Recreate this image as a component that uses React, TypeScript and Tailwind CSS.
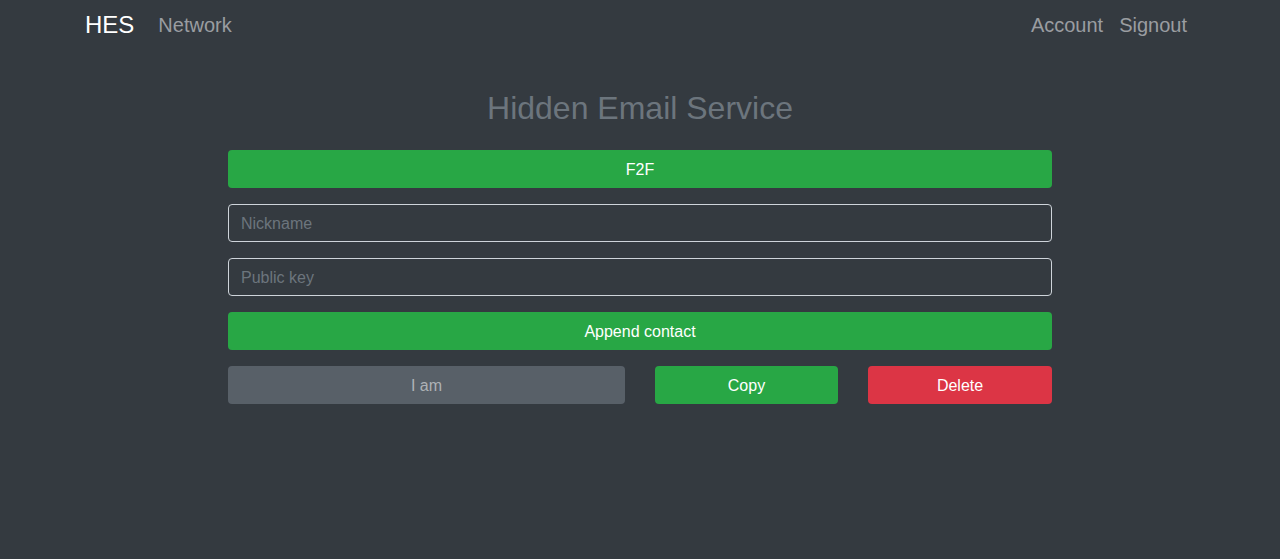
import React from "react";

const font = { fontFamily: '"Liberation Sans", Arial, sans-serif' };

function NavBar() {
  return (
    <nav className="h-12 w-[1140px] mx-auto px-[15px] pt-[2px] flex items-center justify-between">
      <div className="flex items-center">
        <span className="text-[24px] leading-none text-white mr-6">HES</span>
        <a className="text-[20px] leading-none text-[#9a9da1]">Network</a>
      </div>
      <div className="flex items-center gap-4 pr-2">
        <a className="text-[20px] leading-none text-[#9a9da1]">Account</a>
        <a className="text-[20px] leading-none text-[#9a9da1]">Signout</a>
      </div>
    </nav>
  );
}

export default function App() {
  return (
    <div className="min-h-[559px] bg-[#343a40]" style={font}>
      <NavBar />
      <main className="w-[824px] mx-auto pt-10">
        <h2 className="text-[32px] leading-[38px] text-center text-[#6c757d] pt-px mb-[23px]">
          Hidden Email Service
        </h2>
        <div className="flex flex-col gap-4">
          <button className="h-[38px] w-full rounded bg-[#28a745] text-white text-base pt-[2px]">
            F2F
          </button>
          <input
            placeholder="Nickname"
            className="h-[38px] w-full rounded border border-[#ced4da] bg-transparent px-3 pt-[2px] text-base text-white placeholder:text-[#6c757d] outline-none"
          />
          <input
            placeholder="Public key"
            className="h-[38px] w-full rounded border border-[#ced4da] bg-transparent px-3 pt-[2px] text-base text-white placeholder:text-[#6c757d] outline-none"
          />
          <button className="h-[38px] w-full rounded bg-[#28a745] text-white text-base pt-[2px]">
            Append contact
          </button>
          <div className="grid grid-cols-[397px_183px_184px] gap-[30px]">
            <button className="h-[38px] rounded bg-[#586068] text-[#aeb2b6] text-base pt-[2px]">
              I am
            </button>
            <button className="h-[38px] rounded bg-[#28a745] text-white text-base pt-[2px]">
              Copy
            </button>
            <button className="h-[38px] rounded bg-[#dc3545] text-white text-base pt-[2px]">
              Delete
            </button>
          </div>
        </div>
      </main>
    </div>
  );
}
